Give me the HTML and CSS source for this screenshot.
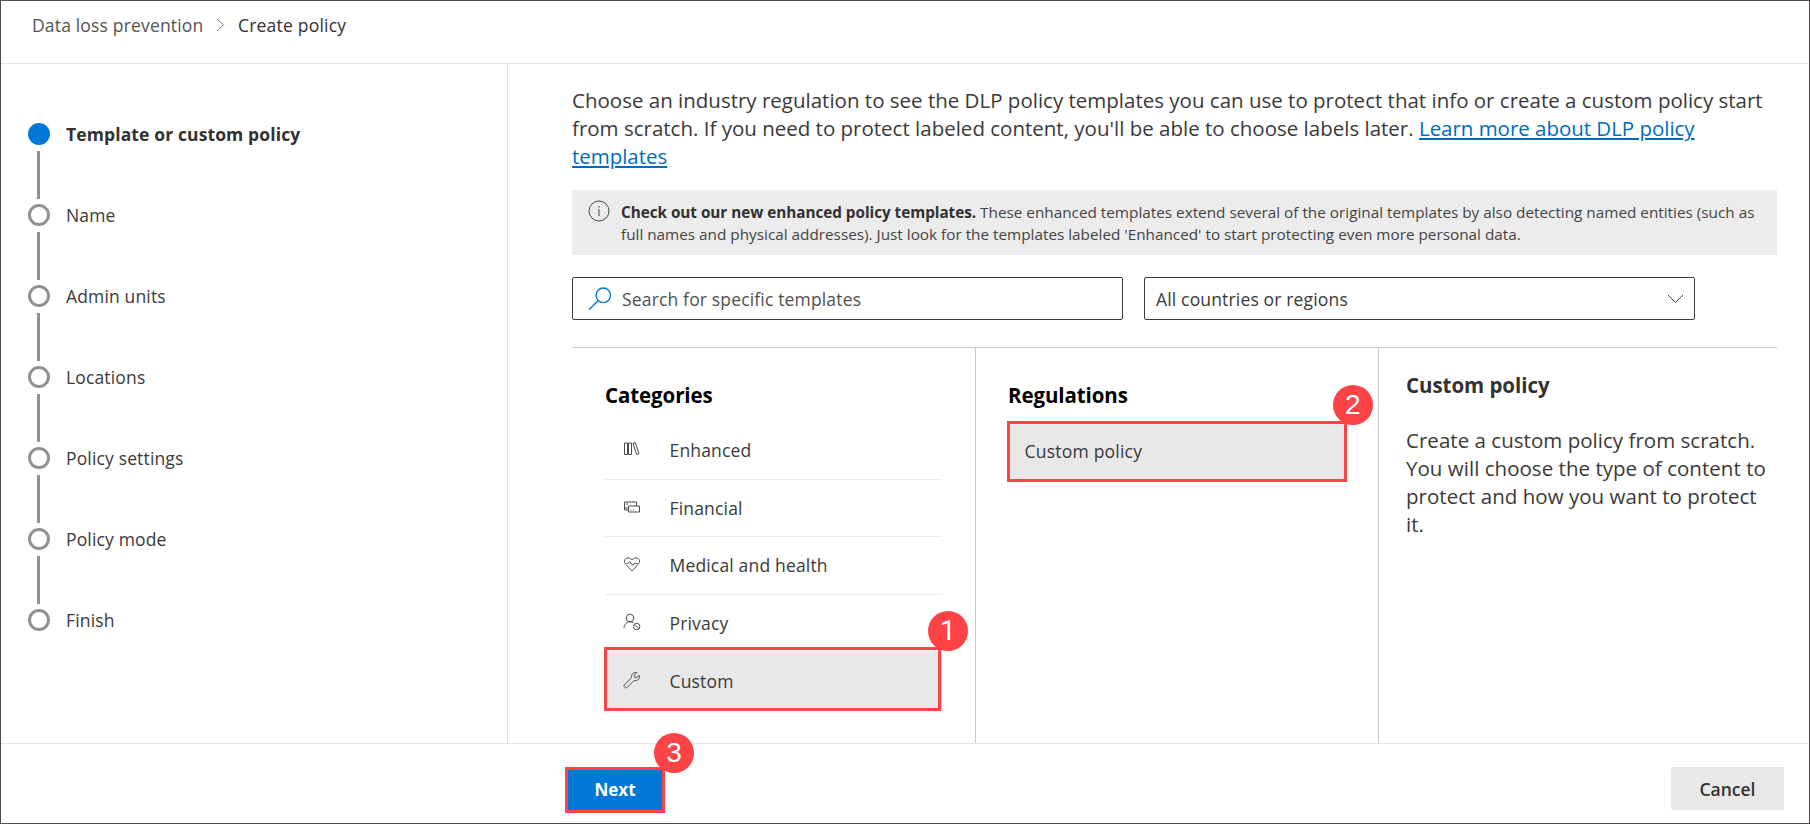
FILE: index.html
```html
<!DOCTYPE html>
<html lang="en">
<head>
<meta charset="utf-8">
<title>Create policy</title>
<link rel="stylesheet" href="styles.css">
</head>
<body>
<div class="shell">
  <header class="header">
    <span class="crumb">Data loss prevention</span>
    <svg class="crumb-chevron" width="9" height="14" viewBox="0 0 9 14"><path d="M1 1l6.500 6L1 13"/></svg>
    <span class="crumb crumb-current">Create policy</span>
  </header>
  <div class="body">
    <nav class="steps">
      <div class="step active"><span class="dot"></span><span class="step-label">Template or custom policy</span></div>
      <div class="step"><span class="dot"></span><span class="step-label">Name</span></div>
      <div class="step"><span class="dot"></span><span class="step-label">Admin units</span></div>
      <div class="step"><span class="dot"></span><span class="step-label">Locations</span></div>
      <div class="step"><span class="dot"></span><span class="step-label">Policy settings</span></div>
      <div class="step"><span class="dot"></span><span class="step-label">Policy mode</span></div>
      <div class="step"><span class="dot"></span><span class="step-label">Finish</span></div>
    </nav>
    <main class="main">
      <p class="intro">Choose an industry regulation to see the DLP policy templates you can use to protect that info or create a custom policy start<br>from scratch. If you need to protect labeled content, you'll be able to choose labels later. <a href="#">Learn more about DLP policy<br>templates</a></p>
      <div class="banner">
        <svg class="info" width="22" height="22" viewBox="0 0 22 22"><circle cx="11" cy="11" r="10"/><path d="M11 9v7M11 6v1.600"/></svg>
        <p class="banner-text"><b>Check out our new enhanced policy templates.</b> These enhanced templates extend several of the original templates by also detecting named entities (such as<br>full names and physical addresses). Just look for the templates labeled 'Enhanced' to start protecting even more personal data.</p>
      </div>
      <div class="filters">
        <div class="field search">
          <svg class="search-icon" width="24" height="24" viewBox="0 0 24 24"><circle cx="15.300" cy="8.300" r="7.300"/><path d="M10 13.700L1 22.700"/></svg>
          <span>Search for specific templates</span>
        </div>
        <div class="field select">
          <span>All countries or regions</span>
          <svg class="select-chevron" width="17" height="10" viewBox="0 0 17 10"><path d="M1 1l7.500 7.500L16 1"/></svg>
        </div>
      </div>
      <div class="columns">
        <section class="col categories">
          <h2>Categories</h2>
          <ul class="list">
            <li><svg class="icon" width="18" height="18" viewBox="0 0 18 18"><path d="M1.500 3h3v11.500h-3zM5.500 3h3v11.500h-3zM10 3.400l2.300-.7 3.700 11.100-2.300.8z"/></svg><span>Enhanced</span></li>
            <li><svg class="icon" width="18" height="18" viewBox="0 0 18 18"><path d="M5.500 12H1.500V4h12v4M5.500 8h11v6h-11zM3 6h2M1.500 10h4M7.500 12h1M10 12h1"/></svg><span>Financial</span></li>
            <li><svg class="icon" width="18" height="18" viewBox="0 0 18 18"><path d="M3.500 10.200L9 15.800l5.500-5.600M1.500 7.500C1 5 2.500 3 5 3c1.800 0 3 .8 4 2 1-1.200 2.200-2 4-2 2.500 0 4 2 3.500 4.500"/><path d="M1.500 8.800h3.200l2-2.300 3 3.800 2-2.300 1 .8h3.800"/></svg><span>Medical and health</span></li>
            <li><svg class="icon" width="18" height="18" viewBox="0 0 18 18"><circle cx="7" cy="5" r="3.800"/><path d="M1 15c.3-3.500 2.500-6.200 6-6.200 1.500 0 2.500.4 3.300 1"/><circle cx="13.700" cy="13.500" r="3.200"/><path d="M11.500 11.300l4.400 4.400"/></svg><span>Privacy</span></li>
            <li class="selected"><svg class="icon" width="18" height="18" viewBox="0 0 18 18"><path d="M16.300 4.300l-2.600 2.400-2-.4-.4-2 2.500-2.600c-2.500-.8-6 1-5.300 5L1.700 13.500c-2 2 .8 4.500 2.700 2.700L11 9.500c4 .8 6.300-2.200 5.300-5.200z"/></svg><span>Custom</span><i class="badge badge-1">1</i></li>
          </ul>
        </section>
        <section class="col regulations">
          <h2>Regulations</h2>
          <div class="regulation"><span>Custom policy</span><i class="badge badge-2">2</i></div>
        </section>
        <section class="col detail">
          <h3>Custom policy</h3>
          <p>Create a custom policy from scratch.<br>You will choose the type of content to<br>protect and how you want to protect<br>it.</p>
        </section>
      </div>
    </main>
  </div>
  <footer class="footer">
    <div class="next-wrap"><button class="btn next">Next</button><i class="badge badge-3">3</i></div>
    <button class="btn cancel">Cancel</button>
  </footer>
</div>
</body>
</html>
```
FILE: styles.css
```css
*, *::after { box-sizing: border-box; }
body { margin: 0; background: #fff; color: #3a3938; font-family: "Open Sans", "Noto Sans", sans-serif; }
p, h2, h3, ul { margin: 0; padding: 0; }
svg { fill: none; stroke: #4a4a4a; flex: none; }
.shell { width: 1810px; height: 824px; border: 1px solid #504b4e; display: flex; flex-direction: column; overflow: hidden; }
.header { height: 63px; flex: none; border-bottom: 1px solid #e5e5e5; display: flex; align-items: center; padding: 0 0 14px 31px; font-size: 17.5px; letter-spacing: .17px; color: #55524f; }
.crumb-chevron { margin: 0 12.500px 0 13px; stroke: #777; }
.crumb-current { color: #323130; letter-spacing: .22px; }
.body { height: 679px; flex: none; display: flex; }
.steps { width: 507px; flex: none; border-right: 1px solid #e1e1e1; padding: 59px 0 0 27px; font-size: 17.5px; letter-spacing: .15px; }
.step { position: relative; height: 81px; display: flex; align-items: flex-start; line-height: 22px; gap: 16px; }
.step:not(:last-child)::after { content: ""; position: absolute; left: 9px; top: 28px; width: 3px; height: 48px; background: #919191; }
.dot { width: 22px; height: 22px; border: 3px solid #919191; border-radius: 50%; }
.active .dot { background: #0078d7; border-color: #0078d7; }
.active .step-label { font-weight: 700; letter-spacing: .12px; color: #323130; }
.main { flex: 1; min-width: 0; padding: 22px 32px 0 64px; display: flex; flex-direction: column; }
.intro { font-size: 20.5px; line-height: 28px; white-space: nowrap; }
.intro a { color: #006cbe; text-decoration-thickness: 2px; text-underline-offset: 2px; letter-spacing: -.03px; }
.banner { margin-top: 20px; height: 65px; background: #ececec; display: flex; padding: 10px 0 0 16px; gap: 11px; }
.banner-text { font-size: 15.3px; line-height: 22px; padding-top: 1px; white-space: nowrap; color: #444; }
.banner-text b { letter-spacing: -.04px; color: #323130; }
.filters { margin-top: 22px; display: flex; gap: 21px; }
.field { width: 551px; height: 43px; border: 1px solid #3b3a39; border-radius: 2px; display: flex; align-items: center; font-size: 17.5px; letter-spacing: .16px; }
.search { padding-left: 15px; gap: 10px; color: #505050; }
.search-icon { stroke: #0078d4; stroke-width: 1.4; }
.select { justify-content: space-between; padding: 0 10px 0 11px; }
.columns { margin-top: 27px; border-top: 1px solid #c8c8c8; flex: 1; display: flex; }
.col { padding-top: 32px; }
h2 { font-size: 20.5px; line-height: 30px; font-weight: 700; letter-spacing: -.1px; color: #000; }
.categories { width: 404px; padding-left: 33px; border-right: 1px solid #c8c8c8; }
.list { list-style: none; width: 337px; margin-top: 12px; }
.list li { position: relative; height: 57.5px; display: flex; align-items: center; padding-left: 18px; gap: 28.5px; font-size: 17.5px; letter-spacing: .17px; border-bottom: 1px solid #ececec; }
.icon { margin-top: -2px; }
.list .selected { height: 57px; background: #e8e8e8; border: 0; }
.selected::after { content: ""; position: absolute; left: -1px; top: -5px; width: 337px; height: 64px; border: 3px solid #fe4346; }
.regulations { width: 403px; padding-left: 32px; border-right: 1px solid #c8c8c8; }
.regulation { position: relative; width: 340px; height: 61px; margin: 11px 0 0 -1px; border: 3px solid #fe4346; background: #e8e8e8; font-size: 17.5px; letter-spacing: .22px; line-height: 54px; padding-left: 14.5px; }
.detail { padding: 22px 0 0 27px; }
h3 { font-size: 20.5px; line-height: 30px; font-weight: 700; letter-spacing: -.05px; color: #323130; }
.detail p { font-size: 20.5px; line-height: 28px; margin-top: 26px; letter-spacing: .03px; }
.badge { position: absolute; z-index: 1; width: 40px; height: 40px; border-radius: 50%; background: #fe4346; color: #fff; font: 28px/40px "Liberation Sans", sans-serif; text-align: center; }
.badge-1 { left: 323px; top: -41px; font-family: Roboto, sans-serif; }
.badge-2 { left: 323px; top: -39px; }
.badge-3 { left: 89px; top: -34px; }
.footer { flex: 1; border-top: 1px solid #e5e5e5; display: flex; justify-content: space-between; padding: 23px 25px 0 564px; }
.next-wrap { position: relative; }
.btn { font: 600 17.5px/38px "Open Sans", sans-serif; padding: 0; }
.next { width: 100px; height: 46px; border: 3px solid #fe4346; background: #0078d7; color: #fff; font-weight: 700; font-size: 17px; }
.cancel { width: 113px; height: 43px; border: 0; border-radius: 2px; background: #e8e8e8; color: #323130; }
```
